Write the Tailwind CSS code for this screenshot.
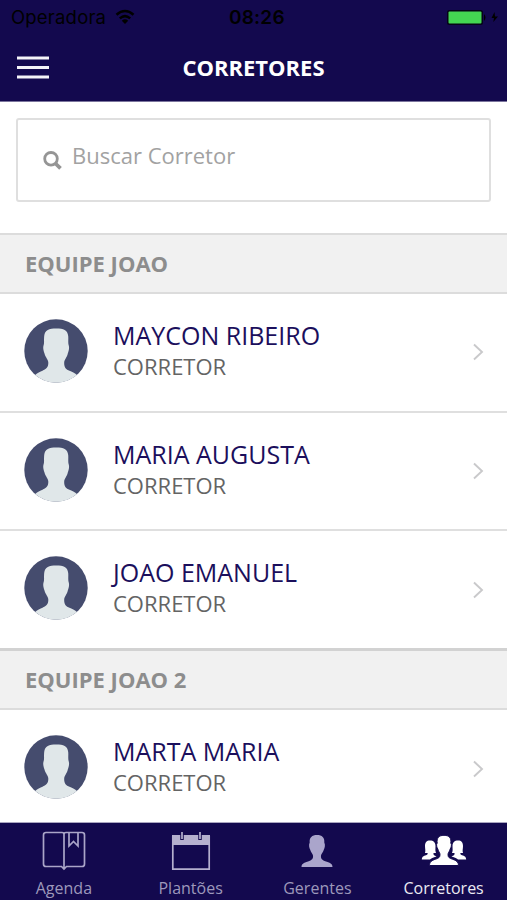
<!DOCTYPE html>
<html lang="pt-BR">
<head>
<meta charset="utf-8">
<title>Corretores</title>
<script src="https://cdn.jsdelivr.net/npm/@tailwindcss/browser@4"></script>
</head>
<body class="bg-white">
<svg class="hidden">
  <symbol id="avatar" viewBox="0 0 64 64">
    <circle cx="32" cy="32" r="31.7" fill="#454c6e"/>
    <path fill="#e0e7e9" d="M32.300 9.500C39.500 9.500 43.600 11 44.200 17C44.500 20 44 23.500 44.500 25.500C45.800 29 44.600 32 43.800 34.500C43 38.500 40.200 40.500 40.200 43.500C40 48.500 42 50.200 45.500 51.700C49 53 51 54.300 52.900 56A31.900 31.900 0 0 1 11.200 56C13.200 54.300 15 53 18.500 51.700C22 50.200 24.500 48.500 24.300 43.500C24.300 40.500 21.500 38.500 20.500 34.500C19.700 32 18.500 29 19.800 25.500C20.300 23.500 19.800 20 20.200 17C20.800 11 25.100 9.500 32.300 9.500Z"/>
  </symbol>
  <symbol id="chevron" viewBox="0 0 12 18">
    <path d="M2 1.500L10 9L2 16.500" fill="none" stroke="#c9c9cb" stroke-width="1.900"/>
  </symbol>
</svg>
<div class="flex h-[900px] w-[507px] flex-col overflow-hidden bg-white font-['Open_Sans',sans-serif]">
  <header class="h-[102px] shrink-0 border-b border-[#7b759d] bg-[#13094e]">
    <div class="flex h-[34px] items-center pr-2 pl-[11px] font-[Inter,sans-serif] text-black">
      <div class="flex w-[218px] items-center">
        <span class="text-[18.500px] leading-none tracking-[0.200px]">Operadora</span>
        <svg class="ml-[9px] h-[16px] w-[20px]" viewBox="0 0 20 16" fill="none" stroke="#000" stroke-width="2.500"><path d="M1.500 5.800Q10-1.800 18.500 5.800M4.800 9.400Q10 4.800 15.200 9.400"/><path d="M10 15L6.800 11.700Q10 9 13.200 11.700Z" fill="#000" stroke="none"/></svg>
      </div>
      <span class="text-[19px] leading-none font-semibold tracking-[0.200px]">08:26</span>
      <svg class="ml-auto h-[16px] w-[52px]" viewBox="0 0 52 16"><rect x="0" y="1" width="36" height="15" rx="2.500" fill="#050317"/><rect x="1.500" y="2.500" width="33" height="12" rx="1" fill="#44d552"/><path d="M37 5Q40 8.500 37 12Z" fill="#000"/><path d="M47.500 3L44.500 9H47L46.300 13L51 7.500H48Z" fill="#000"/></svg>
    </div>
    <div class="grid h-[68px] grid-cols-[1fr_auto_1fr] items-center pl-[17px]">
      <svg class="h-[24px] w-[32px]" viewBox="0 0 32 24" fill="#f4f3f8"><path d="M0 .500H32V3.500H0ZM0 10H32V13H0ZM0 19.500H32V22.500H0Z"/></svg>
      <h1 class="-ml-[17px] pb-[2px] text-[22px] leading-none font-bold text-white">CORRETORES</h1>
    </div>
  </header>
  <main class="flex min-h-0 flex-1 flex-col overflow-hidden">
    <div class="shrink-0 px-4 pt-4 pb-[31px]">
      <div class="flex h-[84px] items-center rounded-[3px] border-2 border-[#dfdfdf] pb-[8px] pl-[25px]">
        <svg class="mt-[8px] mr-[10px] h-[19px] w-[19px]" viewBox="0 0 19 19" fill="none" stroke="#959595"><circle cx="8" cy="7.800" r="6.300" stroke-width="2.800"/><path d="M12.500 12.500L17.500 17.300" stroke-width="3.800"/></svg>
        <span class="-mt-[2px] text-[22px] leading-none text-[#a2a2a2]">Buscar Corretor</span>
      </div>
    </div>
    <h2 class="flex h-[61px] shrink-0 items-center border-y-2 border-[#dcdcdc] bg-[#f1f1f1] pb-[2px] pl-[25px] text-[22px] leading-none font-bold text-[#8d8d8d]">EQUIPE JOAO</h2>
    <div class="flex h-[118.500px] shrink-0 items-center border-b-2 border-[#dfdfdf] pr-[23px] pl-[24px]">
      <svg class="mb-[3px] h-16 w-16"><use href="#avatar"/></svg>
      <div class="ml-[25px] flex-1 pb-[7px]"><div class="text-[25px] leading-[34px] text-[#1b0f5c]">MAYCON RIBEIRO</div><div class="text-[22px] leading-[28px] text-[#646464]">CORRETOR</div></div>
      <svg class="h-[18px] w-3"><use href="#chevron"/></svg>
    </div>
    <div class="flex h-[118.500px] shrink-0 items-center border-b-2 border-[#dfdfdf] pr-[23px] pl-[24px]">
      <svg class="mb-[2px] h-16 w-16"><use href="#avatar"/></svg>
      <div class="ml-[25px] flex-1 pb-[6px]"><div class="text-[25px] leading-[34px] text-[#1b0f5c]">MARIA AUGUSTA</div><div class="text-[22px] leading-[28px] text-[#646464]">CORRETOR</div></div>
      <svg class="h-[18px] w-3"><use href="#chevron"/></svg>
    </div>
    <div class="flex h-[117px] shrink-0 items-center pr-[23px] pl-[24px]">
      <svg class="mb-[3px] h-16 w-16"><use href="#avatar"/></svg>
      <div class="ml-[25px] flex-1 pb-[7px]"><div class="text-[25px] leading-[34px] text-[#1b0f5c]">JOAO EMANUEL</div><div class="text-[22px] leading-[28px] text-[#646464]">CORRETOR</div></div>
      <svg class="h-[18px] w-3"><use href="#chevron"/></svg>
    </div>
    <h2 class="flex h-[62px] shrink-0 items-center border-t-3 border-b-2 border-t-[#d2d2d2] border-b-[#dcdcdc] bg-[#f1f1f1] pb-[2px] pl-[25px] text-[22px] leading-none font-bold text-[#8d8d8d]">EQUIPE JOAO 2</h2>
    <div class="flex h-[117px] shrink-0 items-center pr-[23px] pl-[24px]">
      <svg class="mb-[3px] h-16 w-16"><use href="#avatar"/></svg>
      <div class="ml-[25px] flex-1 pb-[7px]"><div class="text-[25px] leading-[34px] text-[#1b0f5c]">MARTA MARIA</div><div class="text-[22px] leading-[28px] text-[#646464]">CORRETOR</div></div>
      <svg class="h-[18px] w-3"><use href="#chevron"/></svg>
    </div>
  </main>
  <nav class="grid h-[78px] shrink-0 grid-cols-4 border-t border-[#aaa6c0] bg-[#13094e] text-[16px] leading-none text-[#9d98bb]">
    <a class="flex flex-col items-center pl-px"><svg class="mt-[8px] h-[40px] w-[44px]" viewBox="0 0 44 40" fill="none" stroke="#aaa5c8" stroke-width="1.700"><path d="M22 38V3Q22 1.500 20 1.500H4Q1.500 1.500 1.500 4V33Q1.500 35.500 4 35.500H19.500L22 38L24.500 35.500H40Q42.500 35.500 42.500 33V4Q42.500 1.500 40 1.500H24Q22 1.500 22 3M27 2V15L31.500 10.500L36 15V2"/></svg><span class="mt-[9px]">Agenda</span></a>
    <a class="flex flex-col items-center pl-px"><svg class="mt-[8px] h-[40px] w-[40px]" viewBox="0 0 40 40"><path d="M1 4H39V14H1Z" fill="#b5b0ce"/><path d="M1.800 5V38.200H38.200V5" fill="none" stroke="#b5b0ce" stroke-width="1.700"/><path d="M11 4V9M29 4V9" stroke="#13094e" stroke-width="3.500"/><path d="M11 1V8M29 1V8" stroke="#b5b0ce" stroke-width="1.700"/></svg><span class="mt-[9px]">Plantões</span></a>
    <a class="flex flex-col items-center pl-px"><svg class="mt-[11px] h-[34px] w-[32px]" viewBox="0 0 32 34"><path fill="#aaa5cb" d="M16 1C21 1 23.800 3.500 23.300 8.500C24.600 11 23.600 14 22.900 15.500C22 18.500 20.300 19.500 20 21.500C19.700 25 21 26 25 27.500C29.500 29 31.500 30 31.500 33H.500C.500 30 2.500 29 7 27.500C11 26 12.300 25 12 21.500C11.700 19.500 10 18.500 9.100 15.500C8.400 14 7.400 11 8.700 8.500C8.200 3.500 11 1 16 1Z"/></svg><span class="mt-[12px]">Gerentes</span></a>
    <a class="flex flex-col items-center text-[#ebe9f2]"><svg class="mt-[12px] h-[31px] w-[46px]" viewBox="0 0 46 31" fill="#fff"><path id="side" d="M9 5.500C12.500 5.500 14.500 7.500 14.500 11C14.500 14.500 14 15.500 15 18H12.500C12 20 13.500 20.500 15.500 21.500C12 22.500 10 23.500 9 24.500H.800C1 21.500 2.500 21 5 20.200C6.500 19.500 7 19 6.500 18H4C4.800 15.500 4 14 4 11C4 7.500 5.500 5.500 9 5.500Z"/><use href="#side" transform="translate(46 0) scale(-1 1)"/><path stroke="#13094e" stroke-width="1" d="M23 .300C28.500 .300 30.500 3.500 29.800 8C31.200 10 30 12.500 29.200 14C28.500 17 27 17.500 27 19.500C26.900 22.500 28.500 23.200 31.500 24.200C35.500 25.500 37.500 27 37.500 30.500H8.500C8.500 27 10.500 25.500 14.500 24.200C17.500 23.200 19.100 22.500 19 19.500C19 17.500 17.500 17 16.800 14C16 12.500 14.800 10 16.200 8C15.500 3.500 17.500 .300 23 .300Z"/></svg><span class="mt-[14px]">Corretores</span></a>
  </nav>
</div>
</body>
</html>
